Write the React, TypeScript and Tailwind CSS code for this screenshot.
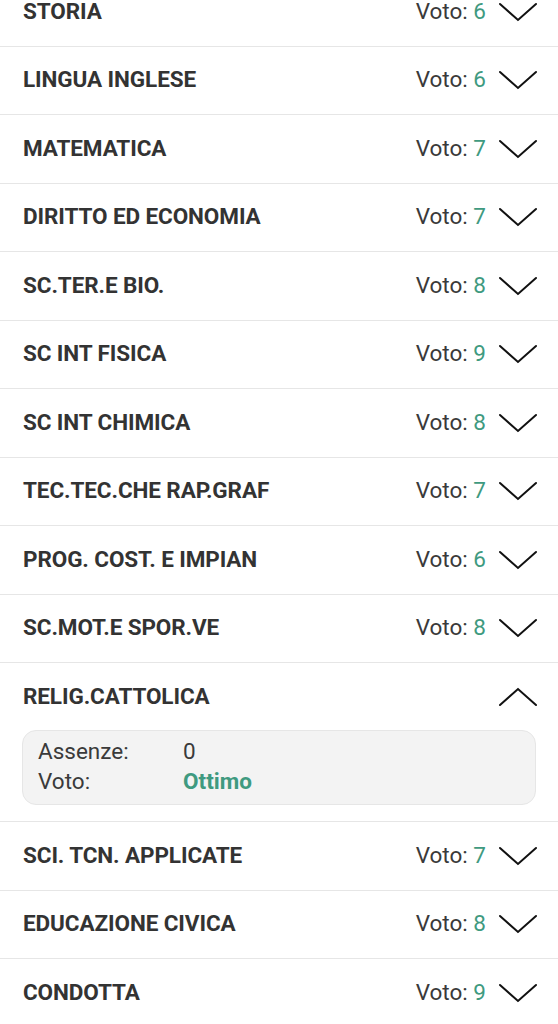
import React from "react";

const subjects: { name: string; voto?: string; open?: boolean }[] = [
  { name: "STORIA", voto: "6" },
  { name: "LINGUA INGLESE", voto: "6" },
  { name: "MATEMATICA", voto: "7" },
  { name: "DIRITTO ED ECONOMIA", voto: "7" },
  { name: "SC.TER.E BIO.", voto: "8" },
  { name: "SC INT FISICA", voto: "9" },
  { name: "SC INT CHIMICA", voto: "8" },
  { name: "TEC.TEC.CHE RAP.GRAF", voto: "7" },
  { name: "PROG. COST. E IMPIAN", voto: "6" },
  { name: "SC.MOT.E SPOR.VE", voto: "8" },
  { name: "RELIG.CATTOLICA", open: true },
  { name: "SCI. TCN. APPLICATE", voto: "7" },
  { name: "EDUCAZIONE CIVICA", voto: "8" },
  { name: "CONDOTTA", voto: "9" },
];

function Chevron({ up }: { up?: boolean }) {
  return (
    <svg width="38" height="20" viewBox="0 0 38 20" fill="none" className="shrink-0">
      <polyline
        points={up ? "1,18 19,2 37,18" : "1,2 19,18 37,2"}
        stroke="#111"
        strokeWidth="2"
        strokeLinejoin="miter"
        strokeLinecap="round"
      />
    </svg>
  );
}

export default function App() {
  return (
    <div
      className="w-[558px] h-[1024px] overflow-hidden bg-white text-[#333]"
      style={{ fontFamily: "Roboto, 'Liberation Sans', sans-serif" }}
    >
      <div className="-mt-[22px]">
        {subjects.map((s, i) => (
          <div key={i} className={i > 0 ? "border-t border-[#e6e6e6]" : ""}>
            <div className="h-[67.5px] flex items-center pl-[23px] pr-[21px]">
              <div className="flex-1 font-bold text-[22.5px] tracking-[-0.1px]">{s.name}</div>
              {s.open ? (
                <Chevron up />
              ) : (
                <div className="flex items-center gap-[13px]">
                  <div className="text-[22.5px] text-[#3a3a3a]">
                    Voto: <span className="text-[#3f9a80]">{s.voto}</span>
                  </div>
                  <Chevron />
                </div>
              )}
            </div>
            {s.open && (
              <div className="mx-[22px] mb-[16px] -mt-[0.5px] h-[75px] rounded-[14px] border border-[#e6e6e6] bg-[#f3f3f3] pl-[15px] pt-[5px] text-[22.5px] leading-[30px] text-[#3a3a3a]">
                <div className="flex">
                  <div className="w-[145px]">Assenze:</div>
                  <div>0</div>
                </div>
                <div className="flex">
                  <div className="w-[145px]">Voto:</div>
                  <div className="font-bold text-[#3f9a80]">Ottimo</div>
                </div>
              </div>
            )}
          </div>
        ))}
      </div>
    </div>
  );
}
